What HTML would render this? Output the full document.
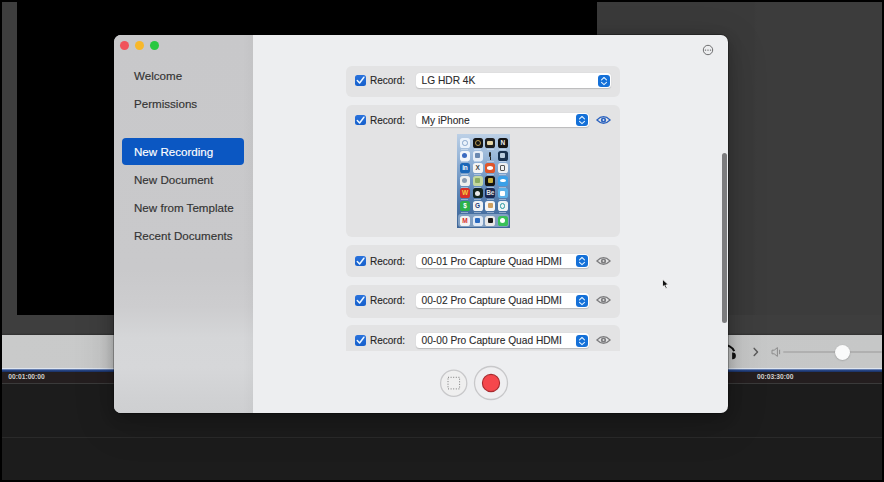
<!DOCTYPE html>
<html><head><meta charset="utf-8">
<style>
*{margin:0;padding:0;box-sizing:border-box}
html,body{width:884px;height:482px;overflow:hidden;background:#000;font-family:"Liberation Sans",sans-serif}
.abs{position:absolute}
#bg{position:absolute;left:2px;top:2px;width:880px;height:478px;background:#1c1c1c;overflow:hidden}
#leftstrip{left:0;top:0;width:15px;height:313px;background:#3e3e3e}
#video{left:15px;top:0;width:580px;height:313px;background:#000}
#rpanel{left:595px;top:0;width:285px;height:332px;background:linear-gradient(90deg,#3a3a3a 0%,#3a3a3a 55%,#3c3c3c 56%,#3c3c3c 100%)}
#under{left:0;top:313px;width:880px;height:20px;background:linear-gradient(#3e3e3e 0%,#3e3e3e 90%,#303030 100%)}
#toolbar{left:0;top:332.7px;width:880px;height:36px;background:linear-gradient(90deg,#c9caca,#c6c7c7)}
#blue{left:0;top:366px;width:880px;height:3.5px;background:linear-gradient(#dfe5ee 0%,#dfe5ee 22%,#2c4d90 45%,#1a2f62 100%)}
#tc{left:0;top:369.5px;width:880px;height:12px;background:#241e1f}
#tcline{left:0;top:381px;width:880px;height:1px;background:#3a3a3a}
#tlline{left:0;top:435px;width:880px;height:1px;background:#2a2a2a}
#track{left:781px;top:349px;width:99px;height:1.8px;border-radius:1px;background:#b0b0b0}
#knob{left:832.9px;top:342.8px;width:15px;height:15px;border-radius:50%;background:#fafafa;box-shadow:0 0.5px 1.5px rgba(0,0,0,.25)}
.tctext{font-size:6.7px;font-weight:bold;color:#cfcfcf;top:370.6px;letter-spacing:0}

#dlg{left:114px;top:35px;width:614.2px;height:377.5px;border-radius:7px;overflow:hidden;background:#edeef0;box-shadow:0 0 0 0.7px rgba(0,0,0,.35),0 4px 14px rgba(0,0,0,.25),0 10px 40px rgba(0,0,0,.18)}
#side{left:0;top:0;width:139px;height:378px;background:linear-gradient(#c8c8ca 0%,#c9c9cb 62%,#cdcdcf 72%,#d5d6d8 80%,#d6d7d9 88%,#d0d1d3 96%,#cecfd1 100%)}
#side:after{content:"";position:absolute;right:0;top:0;width:10px;height:100%;background:linear-gradient(90deg,rgba(0,0,0,0),rgba(0,0,0,.025))}
.tl{width:9px;height:9px;border-radius:50%;top:5.5px}
.si{font-size:11.6px;color:#333;-webkit-text-stroke:0.15px currentColor;left:20px;white-space:nowrap}
#sel{left:8px;top:103px;width:122px;height:27px;border-radius:4px;background:#0b57c2}
#thumb{left:608px;top:118px;width:5px;height:170px;border-radius:2.5px;background:#7c7c7e}

#main{left:139px;top:0;width:476px;height:316px;overflow:hidden}
#iphone{left:111px;top:29px;width:53px;height:94px;overflow:hidden;background:linear-gradient(#bcd0e6 0%,#98b6d8 25%,#6d94c2 50%,#4c76a8 75%,#3f6698 100%)}
#dock{left:1px;top:80px;width:51px;height:13px;border-radius:3px;background:rgba(190,210,230,.5)}
.ic{width:10px;height:10px;border-radius:2.6px}
.ic b{position:absolute;box-sizing:border-box}
.ic .gt{left:0;top:0;width:10px;height:10px;line-height:10px;text-align:center;font-size:6.5px;font-weight:bold;letter-spacing:-0.3px}
.lab{width:7px;height:1px;background:rgba(235,242,250,.45)}
#status{left:0;top:0;width:53px;height:3px}
.row{left:93px;width:274px;border-radius:6px;background:#e3e3e4}
.cb{left:9.2px;width:10.5px;height:10.5px;border-radius:2.5px;background:linear-gradient(#2a72dc,#1660cc)}
.lbl{left:24px;font-size:10px;color:#262626;-webkit-text-stroke:0.12px currentColor;white-space:nowrap}
.pop{left:70px;height:14.8px;border-radius:3.5px;background:#fff;box-shadow:0 0.5px 1px rgba(0,0,0,.18)}
.poptext{left:5.5px;top:2.3px;font-size:10.2px;color:#2a2a2a;-webkit-text-stroke:0.1px currentColor;white-space:nowrap}
.step{right:1px;top:1.5px;width:12px;height:12px;border-radius:3px;background:#1470d8}
.eye{left:250px}

</style></head><body>
<div id="bg">
  <div class="abs" id="leftstrip"></div>
  <div class="abs" id="video"></div>
  <div class="abs" id="rpanel"></div>
  <div class="abs" id="under"></div>
  <div class="abs" id="toolbar"></div>
  <div class="abs" id="blue"></div>
  <div class="abs" id="tc"></div>
  <div class="abs" id="tcline"></div>
  <div class="abs" id="tlline"></div>
  <svg class="abs" style="left:718px;top:341px" width="20" height="20" viewBox="0 0 20 20"><path d="M3 2.6 A9.5 9.5 0 0 1 14.2 8.2" fill="none" stroke="#111" stroke-width="2"/><path d="M12.1 9.4 H12.6 A3.3 3.45 0 0 1 12.6 16.3 H12.1 Z" fill="#111"/></svg>
  <svg class="abs" style="left:749px;top:342.5px" width="10" height="14" viewBox="0 0 10 14"><path d="M3.2 3.4 L6.5 6.9 L3.2 10.4" fill="none" stroke="#5c5c5c" stroke-width="1.5" stroke-linecap="round" stroke-linejoin="round"/></svg>
  <svg class="abs" style="left:766.5px;top:343px" width="14" height="14" viewBox="0 0 14 14"><path d="M3 5.2 H5.2 L8.4 2.6 V11.4 L5.2 8.8 H3 Z" fill="none" stroke="#8c8c8c" stroke-width="1"/><path d="M10.6 4.8 V9.2" stroke="#8c8c8c" stroke-width="1"/></svg>
  <div class="abs" id="track"></div>
  <div class="abs" id="knob"></div>
  <div class="abs tctext" style="left:6.3px">00:01:00:00</div>
  <div class="abs tctext" style="left:755px">00:03:30:00</div>
</div>

<div class="abs" id="dlg">
  <div class="abs" id="side">
    <div class="abs tl" style="left:5.5px;background:#f0545c"></div>
    <div class="abs tl" style="left:20.5px;background:#f8b82a"></div>
    <div class="abs tl" style="left:36px;background:#28c840"></div>
    <div class="abs" id="sel"></div>
    <div class="abs si" style="top:34px">Welcome</div>
    <div class="abs si" style="top:62px">Permissions</div>
    <div class="abs si" style="top:110px;color:#fff">New Recording</div>
    <div class="abs si" style="top:138px">New Document</div>
    <div class="abs si" style="top:166px">New from Template</div>
    <div class="abs si" style="top:194px">Recent Documents</div>
  </div>
  <svg class="abs" style="left:588px;top:9px" width="12" height="12" viewBox="0 0 12 12"><circle cx="6" cy="6" r="4.7" fill="none" stroke="#6e6e70" stroke-width="1"/><circle cx="3.5" cy="6.1" r="0.72" fill="#5e5e60"/><circle cx="6" cy="6.1" r="0.72" fill="#5e5e60"/><circle cx="8.5" cy="6.1" r="0.72" fill="#5e5e60"/></svg>
  <div class="abs" id="thumb"></div>
  <svg class="abs" style="left:325px;top:333px" width="30" height="30" viewBox="0 0 30 30"><circle cx="14.7" cy="15.2" r="13.1" fill="#efefef" stroke="#c8c8ca" stroke-width="1.3"/><rect x="9" y="9.3" width="11.6" height="11.6" fill="none" stroke="#7a7a7a" stroke-width="1" stroke-dasharray="1 1.6"/></svg>
  <svg class="abs" style="left:358px;top:329px" width="38" height="38" viewBox="0 0 38 38"><circle cx="19" cy="19" r="16.5" fill="#efeff1" stroke="#c8c8ca" stroke-width="1.3"/><circle cx="19" cy="19" r="8.6" fill="#f5474c" stroke="#a82a2e" stroke-width="1.1"/></svg>
  <div class="abs" id="main">
<div class="abs row" style="top:31px;height:30.5px"><div class="abs cb" style="top:9.05px"><svg class="abs" style="left:0;top:0" width="11" height="11" viewBox="0 0 11 11"><path d="M2.3 5.6 L4.6 8 L8.9 2.2" fill="none" stroke="#eaf6ff" stroke-width="1.5" stroke-linecap="round" stroke-linejoin="round"/></svg></div><div class="abs lbl" style="top:9.30px">Record:</div><div class="abs pop" style="top:7.00px;width:195px"><div class="abs poptext">LG HDR 4K</div><div class="abs step"><svg class="abs" style="left:0;top:0" width="12" height="12" viewBox="0 0 12 12"><path d="M3.5 4.9 L6 2.5 L8.5 4.9 M3.5 7.3 L6 9.6 L8.5 7.3" fill="none" stroke="#dff1ff" stroke-width="1.1" stroke-linecap="round" stroke-linejoin="round"/></svg></div></div></div>
<div class="abs row" style="top:70px;height:131.5px"><div class="abs cb" style="top:9.55px"><svg class="abs" style="left:0;top:0" width="11" height="11" viewBox="0 0 11 11"><path d="M2.3 5.6 L4.6 8 L8.9 2.2" fill="none" stroke="#eaf6ff" stroke-width="1.5" stroke-linecap="round" stroke-linejoin="round"/></svg></div><div class="abs lbl" style="top:9.80px">Record:</div><div class="abs" id="iphone"><div class="abs" id="status"></div><div class="abs ic" style="left:2.9px;top:3.9px;background:#eaf2fb"><b style="left:2.2px;top:2.2px;width:5.6px;height:5.6px;border-radius:50%;border:1px solid #8aa8cc"></b></div><div class="abs lab" style="left:4.4px;top:14.7px"></div><div class="abs ic" style="left:15.5px;top:3.9px;background:#161616"><b style="left:2px;top:2px;width:6px;height:6px;border-radius:50%;border:1.2px solid #b89a50"></b></div><div class="abs lab" style="left:17.0px;top:14.7px"></div><div class="abs ic" style="left:28.1px;top:3.9px;background:#1e1e1e"><b style="left:2px;top:3px;width:6px;height:4px;border-radius:1px;background:#e6d6a6"></b></div><div class="abs lab" style="left:29.6px;top:14.7px"></div><div class="abs ic" style="left:40.7px;top:3.9px;background:#151515"><b class="gt" style="color:#f0f0f0">N</b></div><div class="abs lab" style="left:42.2px;top:14.7px"></div><div class="abs ic" style="left:2.9px;top:16.5px;background:#f2f5fa"><b style="left:2.5px;top:2.5px;width:5px;height:5px;border-radius:50%;background:#3a6ac0"></b></div><div class="abs lab" style="left:4.4px;top:27.3px"></div><div class="abs ic" style="left:15.5px;top:16.5px;background:#e6edf6"><b style="left:2.5px;top:2.5px;width:5px;height:5px;border-radius:1px;background:#6a88b0"></b></div><div class="abs lab" style="left:17.0px;top:27.3px"></div><div class="abs" style="left:28.1px;top:16.5px;width:10px;height:10px"><b style="position:absolute;left:3.6px;top:1px;width:2.8px;height:5.5px;border-radius:1.4px;background:#222"></b><b style="position:absolute;left:4.5px;top:6px;width:1px;height:3px;background:#222"></b></div><div class="abs lab" style="left:29.6px;top:27.3px"></div><div class="abs ic" style="left:40.7px;top:16.5px;background:#17304f"><b style="left:2.5px;top:2.5px;width:5px;height:5px;border-radius:1px;background:#b8cce0"></b></div><div class="abs lab" style="left:42.2px;top:27.3px"></div><div class="abs ic" style="left:2.9px;top:29.1px;background:#1a66b8"><b class="gt" style="color:#ffffff">in</b></div><div class="abs lab" style="left:4.4px;top:39.9px"></div><div class="abs ic" style="left:15.5px;top:29.1px;background:#f4f4f4"><b class="gt" style="color:#444">X</b></div><div class="abs lab" style="left:17.0px;top:39.9px"></div><div class="abs ic" style="left:28.1px;top:29.1px;background:#e0552a"><b style="left:2px;top:3.3px;width:6px;height:3.4px;border-radius:50%;background:#ffffff"></b></div><div class="abs lab" style="left:29.6px;top:39.9px"></div><div class="abs ic" style="left:40.7px;top:29.1px;background:#eef0f2"><b style="left:2.3px;top:2.3px;width:5.4px;height:5.4px;border-radius:1px;border:1px solid #555"></b></div><div class="abs lab" style="left:42.2px;top:39.9px"></div><div class="abs ic" style="left:2.9px;top:41.7px;background:#eeeeee"><b style="left:2.5px;top:2.5px;width:5px;height:5px;border-radius:50%;background:#8a9ab0"></b></div><div class="abs lab" style="left:4.4px;top:52.5px"></div><div class="abs ic" style="left:15.5px;top:41.7px;background:#c4d8a0"><b style="left:2.5px;top:2.5px;width:5px;height:5px;border-radius:1px;background:#8aac60"></b></div><div class="abs lab" style="left:17.0px;top:52.5px"></div><div class="abs ic" style="left:28.1px;top:41.7px;background:#141414"><b style="left:2.5px;top:2.5px;width:5px;height:5px;border-radius:1px;background:#c8b040"></b></div><div class="abs lab" style="left:29.6px;top:52.5px"></div><div class="abs ic" style="left:40.7px;top:41.7px;background:#3aa0e8"><b style="left:2px;top:3.3px;width:6px;height:3.4px;border-radius:50%;background:#ffffff"></b></div><div class="abs lab" style="left:42.2px;top:52.5px"></div><div class="abs ic" style="left:2.9px;top:54.3px;background:#d8302a"><b class="gt" style="color:#f6d040">W</b></div><div class="abs lab" style="left:4.4px;top:65.1px"></div><div class="abs ic" style="left:15.5px;top:54.3px;background:#12241e"><b style="left:2.5px;top:2.5px;width:5px;height:5px;border-radius:50%;background:#e8e8e8"></b></div><div class="abs lab" style="left:17.0px;top:65.1px"></div><div class="abs ic" style="left:28.1px;top:54.3px;background:#1a2850"><b class="gt" style="color:#e0e0e0">Be</b></div><div class="abs lab" style="left:29.6px;top:65.1px"></div><div class="abs ic" style="left:40.7px;top:54.3px;background:#5ab0e8"><b style="left:2.5px;top:2.5px;width:5px;height:5px;border-radius:1px;background:#ffffff"></b></div><div class="abs lab" style="left:42.2px;top:65.1px"></div><div class="abs ic" style="left:2.9px;top:66.9px;background:#2cb04a"><b class="gt" style="color:#ffffff">$</b></div><div class="abs lab" style="left:4.4px;top:77.7px"></div><div class="abs ic" style="left:15.5px;top:66.9px;background:#f0f2f4"><b class="gt" style="color:#1e3a78">G</b></div><div class="abs lab" style="left:17.0px;top:77.7px"></div><div class="abs ic" style="left:28.1px;top:66.9px;background:#f6f6f6"><b style="left:2.5px;top:2.5px;width:5px;height:5px;border-radius:1px;background:#d0a060"></b></div><div class="abs lab" style="left:29.6px;top:77.7px"></div><div class="abs ic" style="left:40.7px;top:66.9px;background:#eef2f4"><b style="left:2.2px;top:2.2px;width:5.6px;height:5.6px;border-radius:50%;border:1px solid #2a9aa0"></b></div><div class="abs lab" style="left:42.2px;top:77.7px"></div><div class="abs" id="dock"></div><div class="abs ic" style="left:2.9px;top:81.6px;background:#f2f2f2"><b class="gt" style="color:#d8302a">M</b></div><div class="abs ic" style="left:15.5px;top:81.6px;background:#dfe8f4"><b style="left:2.5px;top:2.5px;width:5px;height:5px;border-radius:1px;background:#2a6ac0"></b></div><div class="abs ic" style="left:28.1px;top:81.6px;background:#e8e8e8"><b style="left:2.5px;top:2.5px;width:5px;height:5px;border-radius:1px;background:#1a1a1a"></b></div><div class="abs ic" style="left:40.7px;top:81.6px;background:#38c058"><b style="left:2.5px;top:2.5px;width:5px;height:5px;border-radius:50%;background:#ffffff"></b></div></div><div class="abs pop" style="top:7.50px;width:173px"><div class="abs poptext">My iPhone</div><div class="abs step"><svg class="abs" style="left:0;top:0" width="12" height="12" viewBox="0 0 12 12"><path d="M3.5 4.9 L6 2.5 L8.5 4.9 M3.5 7.3 L6 9.6 L8.5 7.3" fill="none" stroke="#dff1ff" stroke-width="1.1" stroke-linecap="round" stroke-linejoin="round"/></svg></div></div><svg class="abs eye" style="top:9.80px" width="15" height="10" viewBox="0 0 15 10"><path d="M0.9 5 Q7.5 -1.6 14.1 5 Q7.5 11.6 0.9 5 Z" fill="none" stroke="#2c63bf" stroke-width="1.2"/><circle cx="7.5" cy="5" r="2.6" fill="#2c63bf"/><circle cx="7.5" cy="5" r="0.9" fill="#d8e4f4"/></svg></div>
<div class="abs row" style="top:210px;height:32px"><div class="abs cb" style="top:10.55px"><svg class="abs" style="left:0;top:0" width="11" height="11" viewBox="0 0 11 11"><path d="M2.3 5.6 L4.6 8 L8.9 2.2" fill="none" stroke="#eaf6ff" stroke-width="1.5" stroke-linecap="round" stroke-linejoin="round"/></svg></div><div class="abs lbl" style="top:10.80px">Record:</div><div class="abs pop" style="top:8.50px;width:173px"><div class="abs poptext">00-01 Pro Capture Quad HDMI</div><div class="abs step"><svg class="abs" style="left:0;top:0" width="12" height="12" viewBox="0 0 12 12"><path d="M3.5 4.9 L6 2.5 L8.5 4.9 M3.5 7.3 L6 9.6 L8.5 7.3" fill="none" stroke="#dff1ff" stroke-width="1.1" stroke-linecap="round" stroke-linejoin="round"/></svg></div></div><svg class="abs eye" style="top:10.80px" width="15" height="10" viewBox="0 0 15 10"><path d="M0.9 5 Q7.5 -1.6 14.1 5 Q7.5 11.6 0.9 5 Z" fill="none" stroke="#7d7d7f" stroke-width="1.2"/><circle cx="7.5" cy="5" r="2.6" fill="#7d7d7f"/><circle cx="7.5" cy="5" r="0.9" fill="#dcdcdc"/></svg></div>
<div class="abs row" style="top:249.5px;height:33px"><div class="abs cb" style="top:10.55px"><svg class="abs" style="left:0;top:0" width="11" height="11" viewBox="0 0 11 11"><path d="M2.3 5.6 L4.6 8 L8.9 2.2" fill="none" stroke="#eaf6ff" stroke-width="1.5" stroke-linecap="round" stroke-linejoin="round"/></svg></div><div class="abs lbl" style="top:10.80px">Record:</div><div class="abs pop" style="top:8.50px;width:173px"><div class="abs poptext">00-02 Pro Capture Quad HDMI</div><div class="abs step"><svg class="abs" style="left:0;top:0" width="12" height="12" viewBox="0 0 12 12"><path d="M3.5 4.9 L6 2.5 L8.5 4.9 M3.5 7.3 L6 9.6 L8.5 7.3" fill="none" stroke="#dff1ff" stroke-width="1.1" stroke-linecap="round" stroke-linejoin="round"/></svg></div></div><svg class="abs eye" style="top:10.80px" width="15" height="10" viewBox="0 0 15 10"><path d="M0.9 5 Q7.5 -1.6 14.1 5 Q7.5 11.6 0.9 5 Z" fill="none" stroke="#7d7d7f" stroke-width="1.2"/><circle cx="7.5" cy="5" r="2.6" fill="#7d7d7f"/><circle cx="7.5" cy="5" r="0.9" fill="#dcdcdc"/></svg></div>
<div class="abs row" style="top:290px;height:32px"><div class="abs cb" style="top:10.05px"><svg class="abs" style="left:0;top:0" width="11" height="11" viewBox="0 0 11 11"><path d="M2.3 5.6 L4.6 8 L8.9 2.2" fill="none" stroke="#eaf6ff" stroke-width="1.5" stroke-linecap="round" stroke-linejoin="round"/></svg></div><div class="abs lbl" style="top:10.30px">Record:</div><div class="abs pop" style="top:8.00px;width:173px"><div class="abs poptext">00-00 Pro Capture Quad HDMI</div><div class="abs step"><svg class="abs" style="left:0;top:0" width="12" height="12" viewBox="0 0 12 12"><path d="M3.5 4.9 L6 2.5 L8.5 4.9 M3.5 7.3 L6 9.6 L8.5 7.3" fill="none" stroke="#dff1ff" stroke-width="1.1" stroke-linecap="round" stroke-linejoin="round"/></svg></div></div><svg class="abs eye" style="top:10.30px" width="15" height="10" viewBox="0 0 15 10"><path d="M0.9 5 Q7.5 -1.6 14.1 5 Q7.5 11.6 0.9 5 Z" fill="none" stroke="#7d7d7f" stroke-width="1.2"/><circle cx="7.5" cy="5" r="2.6" fill="#7d7d7f"/><circle cx="7.5" cy="5" r="0.9" fill="#dcdcdc"/></svg></div>
  </div>
</div>
<svg class="abs" style="left:661px;top:278.2px" width="11" height="15" viewBox="0 0 11 15"><path d="M1.4 1.1 L1.4 9.1 L3.3 7.5 L4.9 10.9 L6.3 10.3 L4.8 7.0 L7.5 6.8 Z" fill="#111" stroke="#fff" stroke-width="0.9" stroke-linejoin="round"/></svg>
</body></html>
